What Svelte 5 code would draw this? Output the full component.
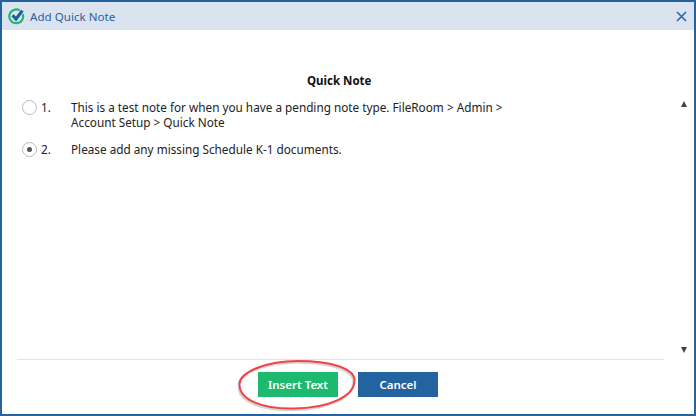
<script>
  const notes = [
    { n: '1.', text: 'This is a test note for when you have a pending note type. FileRoom > Admin > Account Setup > Quick Note', on: false },
    { n: '2.', text: 'Please add any missing Schedule K-1 documents.', on: true }
  ];
  const ring = 'M116.5 21 C116 9 92 2 60 2 C28 2 2 13 1.5 25 C1 41 24 50 55 49.5 C92 49 117 37 116.5 21 Z';
</script>

<div class="dialog">
  <header class="title">
    <svg class="logo" width="17" height="17" viewBox="0 0 17 17" aria-hidden="true">
      <path d="M14.8 6.2A6.9 6.9 0 1 1 11.8 2.4" fill="none" stroke="#22b573" stroke-width="2.2"/>
      <path d="M4.6 7.2 L8 11 L14.4 2.6" fill="none" stroke="#1f5f99" stroke-width="3.2"/>
    </svg>
    <span class="name">Add Quick Note</span>
    <svg class="close" width="11" height="11" viewBox="0 0 11 11" aria-hidden="true">
      <path d="M1 1 L10 10 M10 1 L1 10" stroke="#2a6aa5" stroke-width="1.6" fill="none"/>
    </svg>
  </header>

  <main class="body">
    <div class="content">
      <h1>Quick Note</h1>
      <ul>
        {#each notes as note}
          <li>
            <span class="radio" class:on={note.on}></span>
            <span class="num">{note.n}</span>
            <span class="text">{note.text}</span>
          </li>
        {/each}
      </ul>
    </div>
    <div class="scroll">
      <span class="up"></span>
      <span class="down"></span>
    </div>
  </main>

  <footer class="actions">
    <button class="insert">Insert Text
      <svg class="ring" width="124" height="54" viewBox="0 0 124 54" aria-hidden="true">
        <path d={ring} fill="none" stroke="#b9b9b9" stroke-width="2.5" transform="translate(-1 1.5)" opacity="0.6"/>
        <path d={ring} fill="none" stroke="#ee4449" stroke-width="2"/>
      </svg>
    </button>
    <button class="cancel">Cancel</button>
  </footer>
</div>

<style>
  :global(body) { margin: 0; background: #fff; }
  .dialog {
    width: 696px;
    height: 416px;
    box-sizing: border-box;
    border: 2px solid #23639f;
    display: flex;
    flex-direction: column;
    font-family: "Noto Sans", sans-serif;
    font-size: 11.75px;
    color: #222;
    background: #fff;
  }
  .title {
    height: 28px;
    flex: none;
    background: #dce3f0;
    display: flex;
    align-items: center;
    padding: 0 7px 0 6px;
    gap: 5px;
    color: #2a6198;
  }
  .name { flex: 1; font-size: 11.6px; }
  .body { flex: 1; display: flex; min-height: 0; }
  .content { flex: 1; padding: 0 0 0 20px; }
  h1 {
    margin: 43px 0 0;
    padding-left: 285px;
    font-size: 11.5px;
    font-weight: 700;
    color: #111;
    line-height: 16px;
  }
  ul { list-style: none; margin: 11px 0 0; padding: 0; }
  li {
    display: grid;
    grid-template-columns: 19px 30px 440px;
    margin-bottom: 12px;
    line-height: 15px;
    align-items: start;
  }
  .radio {
    width: 13px;
    height: 13px;
    border: 1px solid #b5bcc6;
    border-radius: 50%;
    background: #fff;
    display: flex;
    align-items: center;
    justify-content: center;
  }
  .radio.on::after {
    content: "";
    width: 5px;
    height: 5px;
    border-radius: 50%;
    background: #555;
  }
  .scroll {
    width: 18px;
    margin-right: 1px;
    display: flex;
    flex-direction: column;
    justify-content: space-between;
    align-items: center;
    padding: 71px 0 6px;
    flex: none;
  }
  .up, .down {
    width: 0;
    height: 0;
    border-left: 3.5px solid transparent;
    border-right: 3.5px solid transparent;
  }
  .up { border-bottom: 6px solid #444; }
  .down { border-top: 6px solid #444; }
  .actions {
    flex: none;
    margin: 0 30px 0 15px;
    height: 55px;
    box-sizing: border-box;
    border-top: 1px solid #e4e4e4;
    display: flex;
    justify-content: center;
    gap: 20px;
    padding: 12px 0 0 15px;
  }
  button {
    position: relative;
    width: 80px;
    height: 25px;
    border: 0;
    padding: 0;
    color: #fff;
    font-family: inherit;
    font-size: 11.5px;
    font-weight: 600;
  }
  .insert { background: #1cb96f; }
  .cancel { background: #23639f; }
  .ring { position: absolute; left: -20px; top: -13px; pointer-events: none; }
</style>
